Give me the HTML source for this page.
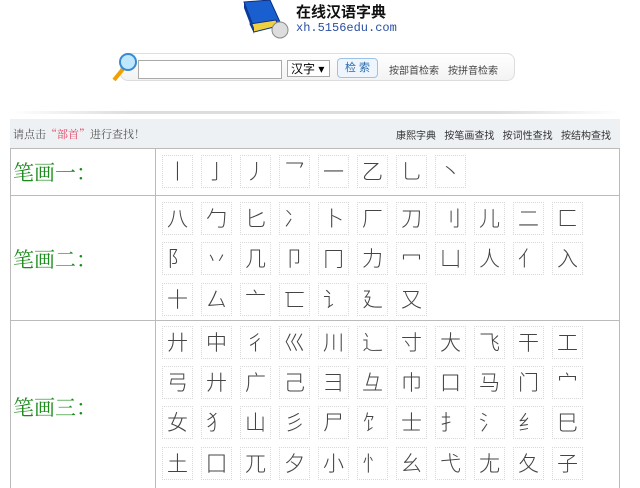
<!DOCTYPE html><html><head><meta charset="utf-8"><style>
body{margin:0;background:#fff;font-family:"Liberation Sans","Noto Sans CJK SC",sans-serif;width:640px;height:484px;overflow:hidden;position:relative}
.a{position:absolute}
.bx{position:absolute;width:29px;height:31px;border:1px dotted #d8d8d8;font-size:21px;color:#444;text-align:center;line-height:31px;font-family:"Noto Sans CJK SC",sans-serif;font-weight:300}
.lab{position:absolute;left:13px;color:#1a8a1a;font-size:21px;font-family:"Noto Serif CJK SC","Noto Sans CJK SC",serif}
.hl{position:absolute;left:10px;width:610px;height:1px;background:#bbb}
</style></head><body>
<svg class="a" style="left:240px;top:0" width="50" height="40"><path d="M4 2 L30 0 L40 22 L14 28 Z" fill="#1a5fd0" stroke="#0a2f80"/><path d="M10 24 L36 20 L38 26 L14 32 Z" fill="#f0d040" stroke="#0a2f80"/><path d="M4 2 L14 28 L14 34 L4 8Z" fill="#0a3a9a"/><circle cx="40" cy="30" r="8" fill="#ddd" stroke="#888"/></svg>
<div class="a" style="left:296px;top:1px;font-size:15px;font-weight:bold;color:#111">在线汉语字典</div>
<div class="a" style="left:296px;top:21px;font-size:12px;color:#2a50a0;font-family:'Liberation Mono',monospace">xh.5156edu.com</div>
<div class="a" style="left:120px;top:53px;width:393px;height:26px;border:1px solid #ddd;border-radius:8px;background:linear-gradient(#fff,#f3f3f3)"></div>
<svg class="a" style="left:110px;top:51px" width="28" height="32"><line x1="4" y1="29" x2="13" y2="18" stroke="#f0a000" stroke-width="4"/><circle cx="18" cy="11" r="8" fill="#bfe8ff" stroke="#3a8ad0" stroke-width="2"/></svg>
<div class="a" style="left:138px;top:60px;width:142px;height:17px;border:1px solid #aaa;background:#fff"></div>
<div class="a" style="left:287px;top:60px;width:43px;height:17px;border:1px solid #aaa;background:#fff;font-size:12px;line-height:17px;padding-left:3px;box-sizing:border-box">汉字 ▾</div>
<div class="a" style="left:337px;top:58px;width:39px;height:18px;border:1px solid #9cc3e6;border-radius:4px;background:#eef5fc;font-size:11px;color:#2a6ab0;text-align:center;line-height:18px">检 索</div>
<div class="a" style="left:389px;top:62px;font-size:10px;color:#444">按部首检索</div>
<div class="a" style="left:448px;top:62px;font-size:10px;color:#444">按拼音检索</div>
<div class="a" style="left:10px;top:111px;width:610px;height:3px;background:linear-gradient(90deg,#fff,#ddd 20%,#ddd 80%,#fff)"></div>
<div class="a" style="left:10px;top:119px;width:610px;height:29px;background:#eef1f4"></div>
<div class="a" style="left:13px;top:126px;font-size:11px;color:#555;font-family:'Noto Serif CJK SC',serif">请点击<span style="color:#e04060">“部首”</span>进行查找！</div>
<div class="a" style="left:396px;top:127px;font-size:10px;color:#333;word-spacing:0">康熙字典&nbsp;&nbsp;&nbsp;按笔画查找&nbsp;&nbsp;&nbsp;按词性查找&nbsp;&nbsp;&nbsp;按结构查找</div>
<div class="hl" style="top:148px"></div><div class="hl" style="top:195px"></div><div class="hl" style="top:320px"></div>
<div class="a" style="left:10px;top:148px;width:1px;height:340px;background:#bbb"></div>
<div class="a" style="left:155px;top:148px;width:1px;height:340px;background:#bbb"></div>
<div class="a" style="left:619px;top:148px;width:1px;height:340px;background:#bbb"></div>
<div class="lab" style="top:157px">笔画一：</div>
<div class="lab" style="top:244px">笔画二：</div>
<div class="lab" style="top:392px">笔画三：</div>
<div id="g"></div>
<script>
var rows=[[155,"丨亅丿乛一乙乚丶"],[202,"八勹匕冫卜厂刀刂儿二匚"],[242,"阝丷几卩冂力冖凵人亻入"],[283,"十厶亠匸讠廴又"],[326,"廾中彳巛川辶寸大飞干工"],[366,"弓廾广己彐彑巾口马门宀"],[406,"女犭山彡尸饣士扌氵纟巳"],[447,"土囗兀夕小忄幺弋尢夂子"]];
var h="";rows.forEach(function(r){Array.from(r[1]).forEach(function(c,i){h+='<div class="bx" style="left:'+(162+i*39)+'px;top:'+r[0]+'px">'+c+'</div>'})});
document.getElementById("g").innerHTML=h;
</script>
</body></html>
